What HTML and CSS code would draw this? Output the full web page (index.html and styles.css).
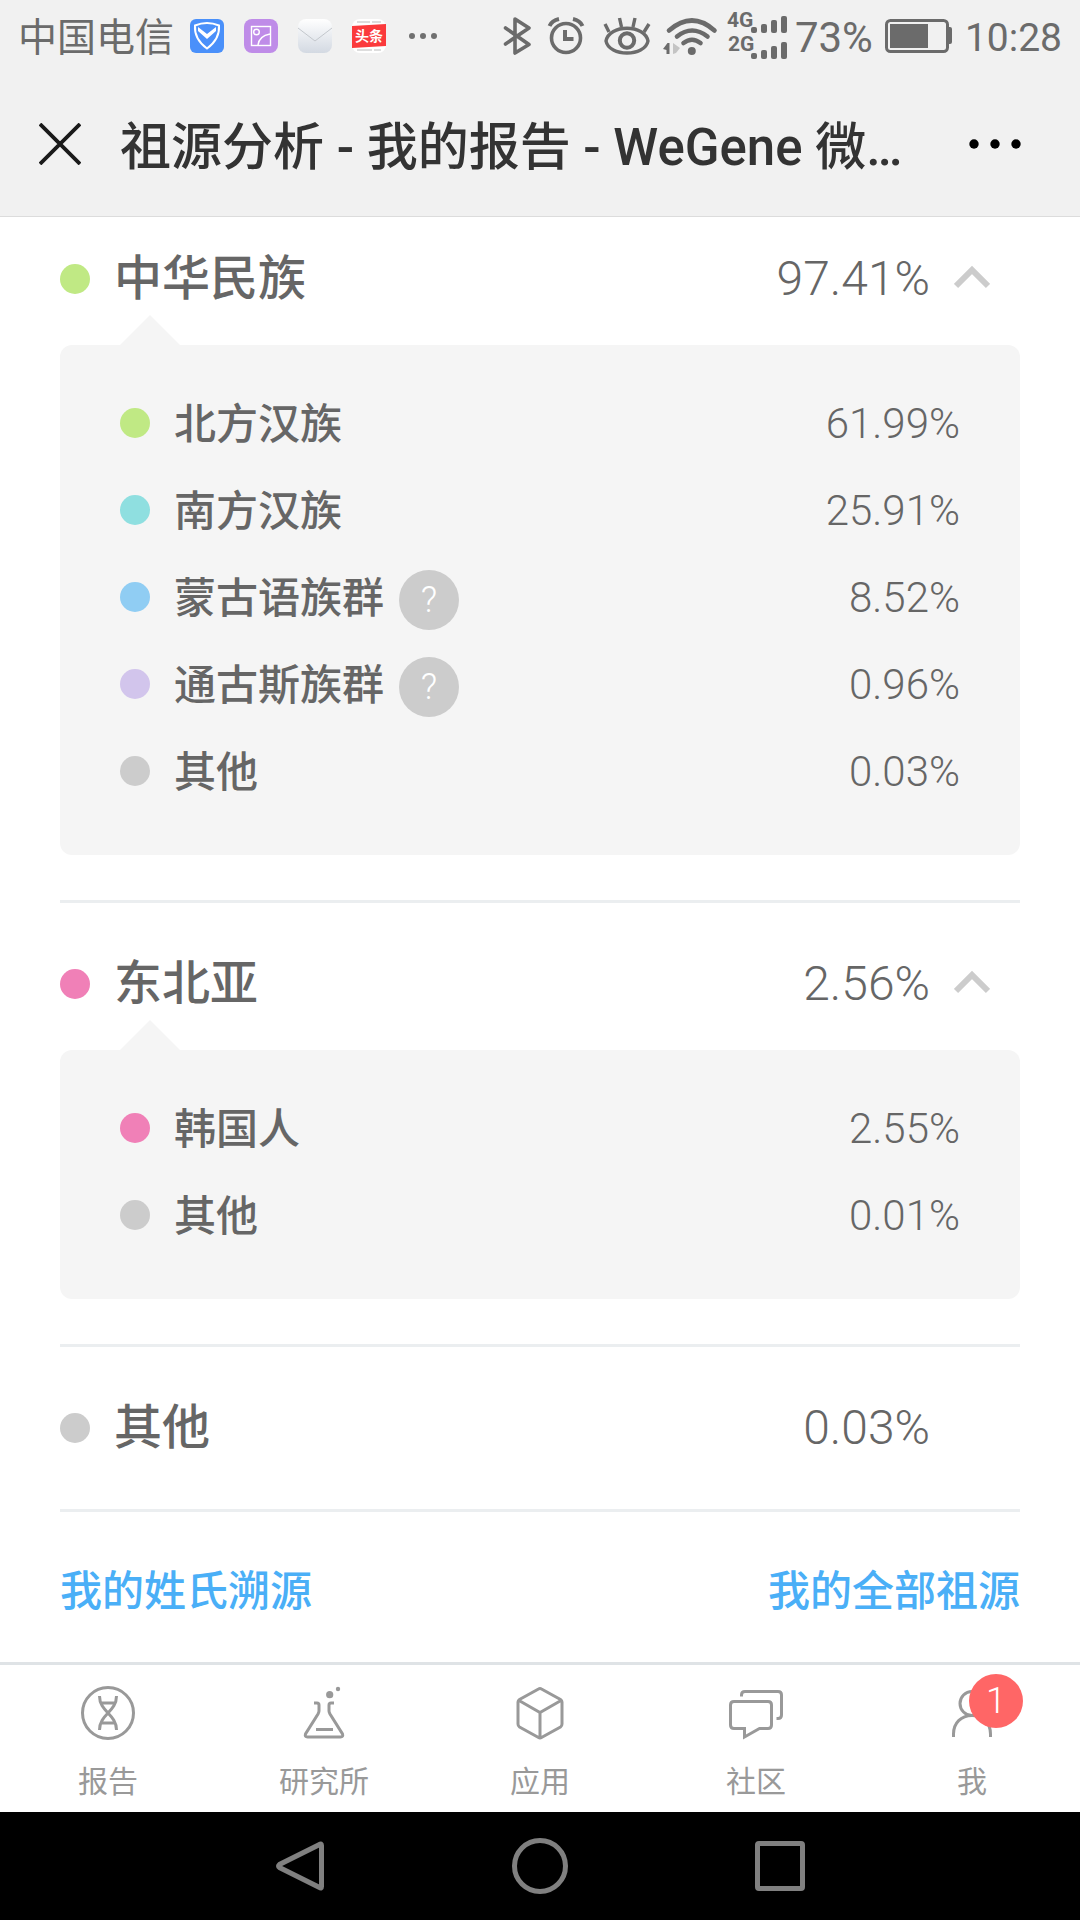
FILE: index.html
```html
<!DOCTYPE html>
<html lang="zh-CN">
<head>
    <meta charset="UTF-8">
    <meta name="viewport" content="width=device-width, initial-scale=1.0">
    <title>祖源分析 - 我的报告 - WeGene</title>
    <link rel="stylesheet" href="styles.css">
</head>
<body>
    <!-- Phone status bar -->
    <div class="status-bar">
        <div class="status-left">
            <span class="carrier">中国电信</span>
            <div class="status-apps">
                <svg width="34" height="34" viewBox="0 0 34 34">
                    <rect width="34" height="34" rx="6" fill="#4a90fa"/>
                    <path d="M5 6.500Q17 1.500 29 6.500Q30 20 17 29.500Q4 20 5 6.500z" fill="none" stroke="#fff" stroke-width="2"/>
                    <path d="M8 8l9 7 9-7v4l-9 8-9-8z" fill="#fff"/>
                </svg>
                <svg width="34" height="34" viewBox="0 0 34 34">
                    <rect width="34" height="34" rx="8" fill="#bf8ce8"/>
                    <g fill="none" stroke="#fff" stroke-width="1.4">
                        <rect x="7.5" y="7.5" width="19" height="19"/>
                        <circle cx="12.5" cy="13" r="2.8"/>
                        <path d="M14 26Q15 17 26 15"/>
                    </g>
                </svg>
                <svg width="34" height="34" viewBox="0 0 34 34">
                    <defs>
                        <linearGradient id="mail" x1="0" y1="0" x2="0" y2="1">
                            <stop offset="0" stop-color="#fff"/>
                            <stop offset="1" stop-color="#d3d9e2"/>
                        </linearGradient>
                    </defs>
                    <rect width="34" height="34" rx="8" fill="url(#mail)"/>
                    <path d="M0 9L17 22 34 9" fill="none" stroke="#c3c7cc"/>
                </svg>
                <svg width="34" height="34" viewBox="0 0 34 34">
                    <rect width="34" height="34" rx="8" fill="#fff"/>
                    <path d="M5 3h13M20 3h9M5 31h15M22 31h7" stroke="#ddd" stroke-width="2"/>
                    <path d="M0 7L34 5V27L0 29z" fill="#fb3a3c"/>
                    <text class="app-text" x="17" y="22" text-anchor="middle">头条</text>
                </svg>
                <svg width="34" height="34" viewBox="0 0 34 34" fill="#707070">
                    <circle cx="6" cy="17" r="3"/>
                    <circle cx="17" cy="17" r="3"/>
                    <circle cx="28" cy="17" r="3"/>
                </svg>
            </div>
        </div>
        <div class="status-right">
            <div class="status-icons">
                <svg width="46" height="72" viewBox="494 0 46 72" fill="none" stroke="#6b6b6b" stroke-width="3.6" stroke-linecap="round" stroke-linejoin="round">
                    <path d="M504.500 28L528 44.500 514 53V19L528 28 504.500 44"/>
                </svg>
                <svg width="52" height="72" viewBox="540 0 52 72" fill="none" stroke="#6b6b6b" stroke-width="3.6">
                    <circle cx="565" cy="38" r="14.500"/>
                    <path d="M564 30v9h8.500" stroke-width="4"/>
                    <path d="M548.500 26Q551 20.500 558 19M581.500 26Q579 20.500 572 19" stroke-width="4"/>
                </svg>
                <svg width="63" height="72" viewBox="592 0 63 72" fill="none" stroke="#6b6b6b" stroke-width="3.4">
                    <path d="M605 41C608 24 644 24 647 41C644 57 608 57 605 41z"/>
                    <circle cx="626" cy="40.500" r="7.200" stroke-width="4"/>
                    <path d="M608 32L604 24M620.500 27L618.500 18M632 27L634 18M643 32L648 24"/>
                </svg>
                <svg width="65" height="72" viewBox="655 0 65 72" fill="none" stroke="#6b6b6b" stroke-width="4.6" stroke-linecap="round">
                    <path d="M668 30.500Q691 10.500 713.500 30.500M676 36.500Q691 24.500 706.500 36.500M682.500 43Q691 36.500 699.500 43"/>
                    <circle cx="690.800" cy="51" r="4" fill="#6b6b6b" stroke="none"/>
                    <path d="M662 49l4.500-6h2v11h-3v-4z" fill="#6b6b6b" stroke="none"/>
                    <path d="M672 43l7 5-4 5-3 1z" fill="#c4c4c4" stroke="none"/>
                </svg>
                <svg width="70" height="72" viewBox="720 0 70 72" fill="#6b6b6b">
                    <text class="signal-text" x="726" y="27">4G</text>
                    <text class="signal-text" x="727" y="51">2G</text>
                    <rect x="750" y="27" width="6" height="6" rx="2"/>
                    <rect x="760" y="24" width="6" height="9" rx="2"/>
                    <rect x="770" y="20" width="6" height="13" rx="2"/>
                    <rect x="780" y="16" width="6" height="17" rx="2"/>
                    <rect x="750" y="53" width="6" height="6" rx="2"/>
                    <rect x="760" y="50" width="6" height="9" rx="2"/>
                    <rect x="770" y="46" width="6" height="13" rx="2"/>
                    <rect x="780" y="42" width="6" height="17" rx="2"/>
                </svg>
            </div>
            <span class="battery">73%</span>
            <svg width="68" height="34" viewBox="0 0 68 34">
                <rect x="1.500" y="1.500" width="61" height="31" rx="4" fill="none" stroke="#6b6b6b" stroke-width="3"/>
                <rect x="5" y="5" width="38" height="24" fill="#6b6b6b"/>
                <path d="M63 8h2q2 0 2 2v13q0 2-2 2h-2z" fill="#6b6b6b"/>
            </svg>
            <span class="clock">10:28</span>
        </div>
    </div>

    <!-- Title bar -->
    <div class="header">
        <button class="close-button" aria-label="关闭">
            <svg width="42" height="42" viewBox="0 0 42 42" stroke="#1a1a1a" stroke-width="3.800">
                <path d="M1 1L41 41M41 1L1 41"/>
            </svg>
        </button>
        <h1>祖源分析 - 我的报告 - WeGene 微…</h1>
        <button class="menu-button" aria-label="更多">
            <svg width="54" height="12" viewBox="0 0 54 12">
                <circle cx="6" cy="6" r="4.700"/>
                <circle cx="27" cy="6" r="4.700"/>
                <circle cx="48" cy="6" r="4.700"/>
            </svg>
        </button>
    </div>

    <!-- Ancestry report -->
    <main class="report">
        <section class="item">
            <div class="item-head">
                <span class="dot green"></span>
                <h2>中华民族</h2>
                <span class="percent">97.41%</span>
                <button class="toggle" aria-label="收起">
                    <svg width="36" height="28" viewBox="0 0 36 28" fill="none" stroke="#ccc" stroke-width="6">
                        <path d="M2 21L18 5 34 21"/>
                    </svg>
                </button>
            </div>
            <ul class="panel">
                <li><span class="dot green"></span><span class="name">北方汉族</span><span class="percent">61.99%</span></li>
                <li><span class="dot teal"></span><span class="name">南方汉族</span><span class="percent">25.91%</span></li>
                <li><span class="dot blue"></span><span class="name">蒙古语族群</span><button class="help">?</button><span class="percent">8.52%</span></li>
                <li><span class="dot purple"></span><span class="name">通古斯族群</span><button class="help">?</button><span class="percent">0.96%</span></li>
                <li><span class="dot gray"></span><span class="name">其他</span><span class="percent">0.03%</span></li>
            </ul>
        </section>

        <section class="item">
            <div class="item-head">
                <span class="dot pink"></span>
                <h2>东北亚</h2>
                <span class="percent">2.56%</span>
                <button class="toggle" aria-label="收起">
                    <svg width="36" height="28" viewBox="0 0 36 28" fill="none" stroke="#ccc" stroke-width="6">
                        <path d="M2 21L18 5 34 21"/>
                    </svg>
                </button>
            </div>
            <ul class="panel">
                <li><span class="dot pink"></span><span class="name">韩国人</span><span class="percent">2.55%</span></li>
                <li><span class="dot gray"></span><span class="name">其他</span><span class="percent">0.01%</span></li>
            </ul>
        </section>

        <section class="item">
            <div class="item-head">
                <span class="dot gray"></span>
                <h2>其他</h2>
                <span class="percent">0.03%</span>
            </div>
        </section>

        <div class="links">
            <a href="#">我的姓氏溯源</a>
            <a href="#">我的全部祖源</a>
        </div>
    </main>

    <!-- Bottom tabs -->
    <nav class="tab-bar">
        <a href="#" class="tab">
            <svg width="60" height="60" viewBox="0 0 60 60">
                <circle cx="30" cy="30" r="25.500"/>
                <path d="M21.500 13C21.500 29 38.500 31 38.500 47M38.500 13C38.500 29 21.500 31 21.500 47M23 20h14M23 40h14"/>
            </svg>
            <span>报告</span>
        </a>
        <a href="#" class="tab">
            <svg width="60" height="60" viewBox="0 0 60 60">
                <path d="M20 20h3q2 0 2 2v6q0 1-1 3L11.500 51q-1 3 2 3h33q3 0 2-3L36 31q-1-2-1-3v-6q0-2 2-2h3M22 46.500h17"/>
                <circle class="solid" cx="35.700" cy="11.700" r="3.600"/>
                <circle class="solid" cx="44" cy="6" r="2.200"/>
            </svg>
            <span>研究所</span>
        </a>
        <a href="#" class="tab">
            <svg width="60" height="60" viewBox="0 0 60 60">
                <path d="M28.500 6q1.500-1 3 0L50.500 16.500q1.500 1 1.500 2.500v22q0 2-1.500 3L31.500 54.500q-1.500 1-3 0L9.500 44q-1.500-1-1.500-3V19q0-1.500 1.500-2.500zM9 17.500L30 29.500 51 17.500M30 29.500V55"/>
            </svg>
            <span>应用</span>
        </a>
        <a href="#" class="tab">
            <svg width="60" height="60" viewBox="0 0 60 60">
                <path d="M8 18.500h34q3.500 0 3.500 3.500v20q0 3.500-3.500 3.500h-8.500L18.500 54V45.500H8q-3.500 0-3.500-3.500V22q0-3.500 3.500-3.500z"/>
                <path d="M15.500 13.500V12q0-3.500 3.500-3.500h33q3.500 0 3.500 3.500v20q0 3.500-3.500 3.500h-1.500"/>
            </svg>
            <span>社区</span>
        </a>
        <a href="#" class="tab">
            <span class="tab-icon">
                <svg width="60" height="60" viewBox="0 0 60 60">
                    <circle cx="30" cy="20.500" r="12"/>
                    <path d="M11.500 54V51C11.500 40 19 32.500 30 32.500S48.500 40 48.500 51V54"/>
                </svg>
                <span class="badge">1</span>
            </span>
            <span>我</span>
        </a>
    </nav>

    <!-- System navigation -->
    <div class="system-nav">
        <button aria-label="返回">
            <svg width="60" height="60" viewBox="0 0 60 60"><path d="M49.500 8.500Q51.500 7 51.500 9.500V50.500Q51.500 53 49.500 51.500L9.500 31.500Q7.500 30 9.500 28.500z"/></svg>
        </button>
        <button aria-label="主页">
            <svg width="60" height="60" viewBox="0 0 60 60"><circle cx="30" cy="30" r="25.500"/></svg>
        </button>
        <button aria-label="最近任务">
            <svg width="60" height="60" viewBox="0 0 60 60"><rect x="7.500" y="7.500" width="45" height="45" rx="1.500"/></svg>
        </button>
    </div>
</body>
</html>
```

FILE: styles.css
```css
body {
    font-family: Roboto, "Noto Sans CJK SC", sans-serif;
    background-color: #fff;
    color: #666;
    margin: 0;
    padding: 0;
    min-height: 100vh;
    display: flex;
    flex-direction: column;
}

h1,
h2,
ul {
    margin: 0;
    padding: 0;
    font-weight: normal;
}

button {
    border: none;
    background: none;
    padding: 0;
    font-family: inherit;
    cursor: pointer;
}

a {
    text-decoration: none;
}

svg {
    display: block;
}

/* Status bar */
.status-bar {
    display: flex;
    justify-content: space-between;
    align-items: center;
    height: 72px;
    padding: 0 18px;
    background-color: #f1f1f1;
    color: #6b6b6b;
    font-size: 39px;
    line-height: 68px;
    white-space: nowrap;
}

.status-bar span {
    padding-top: 4px;
}

.status-left,
.status-right,
.status-apps,
.status-icons {
    display: flex;
    align-items: center;
}

.status-left {
    gap: 16px;
}

.status-apps {
    gap: 20px;
}

.status-right {
    gap: 12px;
}

.status-icons {
    margin-right: -8px;
}

.battery {
    font-size: 42px;
}

.app-text {
    font-size: 14px;
    font-weight: bold;
    fill: #fff;
}

.signal-text {
    font-size: 21px;
    font-weight: bold;
}

/* Title bar */
.header {
    display: flex;
    align-items: center;
    height: 144px;
    padding: 0 58px 0 39px;
    background-color: #f1f1f1;
    border-bottom: 1px solid #dcdcdc;
}

.header h1 {
    flex: 1;
    margin-left: 39px;
    padding-top: 8px;
    color: #333;
    font-size: 51px;
    font-weight: 500;
    line-height: 72px;
    white-space: nowrap;
}

/* Report */
.report {
    flex: 1;
    padding: 0 60px;
}

.item {
    padding: 45px 0;
    border-bottom: 3px solid #ebeef0;
}

.item:first-child {
    padding-top: 26px;
}

.item-head {
    display: grid;
    grid-template-columns: 30px 1fr auto 66px;
    column-gap: 24px;
    align-items: center;
    height: 72px;
    font-size: 48px;
    line-height: 72px;
}

.item-head h2 {
    font-size: 48px;
    font-weight: 500;
}

.dot {
    width: 30px;
    height: 30px;
    border-radius: 50%;
}

.green { background-color: #c0e984; }
.teal { background-color: #8fdfe0; }
.blue { background-color: #90cdf3; }
.purple { background-color: #d2c5ec; }
.gray { background-color: #ccc; }
.pink { background-color: #f080b7; }

.percent {
    font-weight: 300;
}

.panel {
    position: relative;
    margin-top: 30px;
    padding: 34px 60px 41px;
    background-color: #f5f5f5;
    border-radius: 12px;
    list-style: none;
    font-size: 42px;
    line-height: 60px;
}

/* Arrow on top of the panel */
.panel::before {
    content: "";
    position: absolute;
    top: -30px;
    left: 60px;
    border: 30px solid transparent;
    border-top: none;
    border-bottom-color: #f5f5f5;
}

.panel li {
    display: flex;
    align-items: center;
    height: 87px;
}

.panel .name {
    margin-left: 24px;
    padding-top: 4px;
    font-weight: 500;
}

.panel .percent {
    margin-left: auto;
    padding-top: 2px;
}

.help {
    width: 60px;
    height: 60px;
    margin-top: 6px;
    margin-left: 15px;
    border-radius: 50%;
    background-color: #ccc;
    color: #fff;
    font-size: 36px;
    font-weight: 300;
}

.links {
    display: flex;
    justify-content: space-between;
    align-items: center;
    height: 150px;
    font-size: 42px;
    font-weight: 500;
}

.links a {
    color: #4aaff7;
}

/* Bottom tabs */
.tab-bar {
    display: flex;
    background-color: #fff;
    border-top: 3px solid #dfe3e6;
}

.tab {
    flex: 1;
    display: flex;
    flex-direction: column;
    align-items: center;
    gap: 18px;
    padding: 18px 0 9px;
    color: #999;
    font-size: 30px;
    line-height: 42px;
}

.tab svg {
    fill: none;
    stroke: #999;
    stroke-width: 3;
    stroke-linecap: butt;
}

.tab .solid {
    fill: #999;
    stroke: none;
}

.tab-icon {
    position: relative;
}

.badge {
    position: absolute;
    top: -9px;
    left: 27px;
    width: 54px;
    height: 54px;
    border-radius: 50%;
    background-color: #ff6666;
    color: #fff;
    font-size: 36px;
    font-weight: 300;
    line-height: 54px;
    text-align: center;
}

/* System navigation */
.system-nav {
    display: flex;
    height: 108px;
    padding: 0 180px;
    background-color: #000;
}

.system-nav button {
    flex: 1;
    display: flex;
    justify-content: center;
    align-items: center;
}

.system-nav svg {
    fill: none;
    stroke: #808080;
    stroke-width: 5;
}
```
